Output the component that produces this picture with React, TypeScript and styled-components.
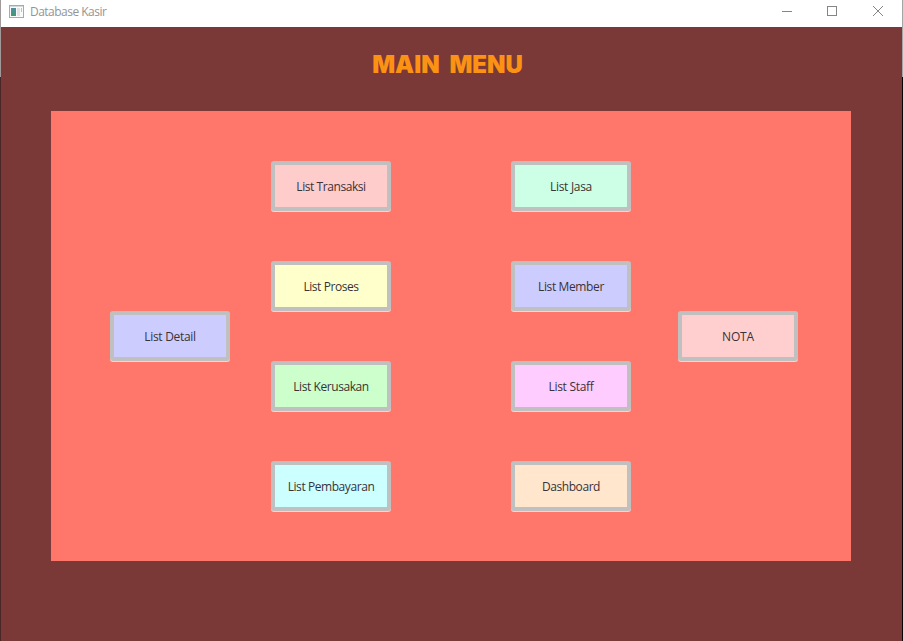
import React from "react";
import styled, { createGlobalStyle } from "styled-components";

const GlobalStyle = createGlobalStyle`
  * { box-sizing: border-box; }
  html, body { margin: 0; padding: 0; overflow: hidden; }
  body { font-family: "Open Sans", "Noto Sans", sans-serif; }
`;

const Desktop = styled.div`
  display: flex;
  width: 903px;
  height: 641px;
`;

const LeftEdge = styled.div`
  width: 1px;
  background: linear-gradient(#a09a9a 0 77px, #4a2626 77px);
`;

const RightEdge = styled.div`
  width: 1px;
  background: linear-gradient(#a5a5a5 0 77px, #080405 77px);
`;

const Window = styled.main`
  flex: 1;
  display: flex;
  flex-direction: column;
  background: #7a3937;
`;

const TitleBar = styled.header`
  display: flex;
  align-items: center;
  height: 27px;
  padding: 0 18px 4px 8px;
  background: #fff;
`;

const WindowTitle = styled.span`
  flex: 1;
  margin-left: 6px;
  padding-top: 1px;
  font-size: 12px;
  line-height: 16px;
  letter-spacing: -0.52px;
  color: #949494;
`;

const WindowControls = styled.div`
  display: flex;
  gap: 34px;
  svg { display: block; }
`;

const Heading = styled.h1`
  margin: 0;
  height: 84px;
  padding: 22px 8px 0 0;
  text-align: center;
  font: 900 24px/32px Inter, "Liberation Sans", sans-serif;
  letter-spacing: 0;
  word-spacing: 5px;
  color: #fb9214;
`;

const Panel = styled.section`
  display: flex;
  align-items: center;
  width: 800px;
  height: 450px;
  margin-left: 50px;
  padding-left: 59px;
  background: #ff776b;
`;

const Column = styled.div<{ $before: number }>`
  display: flex;
  flex-direction: column;
  gap: 50px;
  margin-left: ${(p) => p.$before}px;
`;

const MenuButton = styled.button<{ $color: string; $spacing?: number }>`
  width: 120px;
  height: 50px;
  padding: 2px 0 0;
  border: 4px solid #c0c0c0;
  border-radius: 3px;
  background: ${(p) => p.$color};
  box-shadow: 0 1px 0 #ffd0ca;
  color: #3a3236;
  font-family: inherit;
  font-size: 12px;
  line-height: 16px;
  letter-spacing: ${(p) => p.$spacing ?? -0.43}px;
  white-space: nowrap;
`;

type Item = { label: string; color: string; spacing?: number };

const columns: { before: number; items: Item[] }[] = [
  { before: 0, items: [{ label: "List Detail", color: "#ccccff", spacing: -0.3 }] },
  {
    before: 41,
    items: [
      { label: "List Transaksi", color: "#ffcccc" },
      { label: "List Proses", color: "#ffffcc" },
      { label: "List Kerusakan", color: "#ccffcc" },
      { label: "List Pembayaran", color: "#ccffff" },
    ],
  },
  {
    before: 120,
    items: [
      { label: "List Jasa", color: "#ccffe6", spacing: -0.3 },
      { label: "List Member", color: "#ccccff", spacing: -0.37 },
      { label: "List Staff", color: "#ffccff", spacing: -0.3 },
      { label: "Dashboard", color: "#ffe6cc" },
    ],
  },
  { before: 47, items: [{ label: "NOTA", color: "#ffcfcf", spacing: -0.2 }] },
];

const AppIcon = () => (
  <svg width="15" height="13" viewBox="1 0 15 13">
    <defs>
      <linearGradient id="pane" x1="0" y1="0" x2="0" y2="1">
        <stop offset="0" stopColor="#4f8fa0" />
        <stop offset="1" stopColor="#3f9a70" />
      </linearGradient>
    </defs>
    <rect x="1.5" y="0.5" width="14" height="12" fill="#fafafa" stroke="#a9a9ad" />
    <rect x="2" y="1" width="13" height="1" fill="#d4d8da" />
    <rect x="3" y="3" width="5" height="8" fill="url(#pane)" />
    <rect x="9" y="3" width="3" height="8" fill="#dfe3e3" />
    <rect x="13" y="3" width="1" height="4" fill="#b8c4c4" />
  </svg>
);

const Minimize = () => (
  <svg width="12" height="12" viewBox="0 0 12 12" stroke="#858585" fill="none">
    <path d="M2 5.5H12" />
  </svg>
);

const Maximize = () => (
  <svg width="12" height="12" viewBox="0 0 12 12" stroke="#858585" fill="none">
    <rect x="1.5" y="0.5" width="9" height="9" />
  </svg>
);

const Close = () => (
  <svg width="12" height="12" viewBox="0 0 12 12" stroke="#858585" fill="none">
    <path d="M1 0L11 10M11 0L1 10" />
  </svg>
);

export default function App() {
  return (
    <>
      <GlobalStyle />
      <Desktop>
        <LeftEdge />
        <Window>
          <TitleBar>
            <AppIcon />
            <WindowTitle>Database Kasir</WindowTitle>
            <WindowControls>
              <Minimize />
              <Maximize />
              <Close />
            </WindowControls>
          </TitleBar>
          <Heading>MAIN MENU</Heading>
          <Panel>
            {columns.map((column, i) => (
              <Column key={i} $before={column.before}>
                {column.items.map((item) => (
                  <MenuButton key={item.label} $color={item.color} $spacing={item.spacing}>
                    {item.label}
                  </MenuButton>
                ))}
              </Column>
            ))}
          </Panel>
        </Window>
        <RightEdge />
      </Desktop>
    </>
  );
}
